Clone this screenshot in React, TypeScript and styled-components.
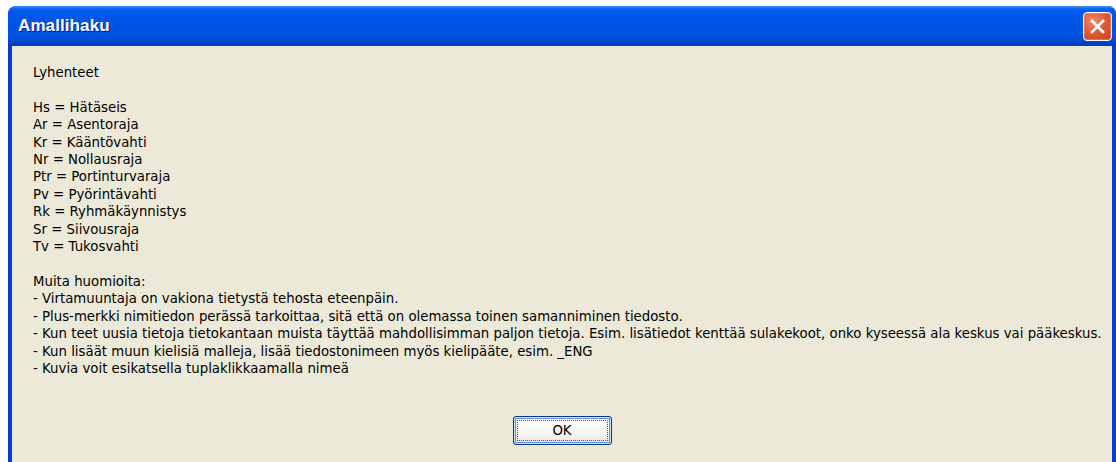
import React from 'react';
import styled, { createGlobalStyle } from 'styled-components';

const GlobalStyle = createGlobalStyle`
  html, body {
    margin: 0;
    padding: 0;
    background: #ffffff;
    overflow: hidden;
  }
  body {
    padding: 6px 0 0 8px;
  }
`;

const Window = styled.div`
  width: 1108px;
  height: 470px;
  display: flex;
  flex-direction: column;
  border-radius: 8px 8px 0 0;
  background: #0842d8;
  overflow: hidden;
`;

const TitleBar = styled.div`
  height: 40px;
  flex: none;
  display: flex;
  align-items: center;
  justify-content: space-between;
  padding: 0 4px 0 10px;
  background: linear-gradient(
    to bottom,
    #3d95ff 0px,
    #0a5ff0 3px,
    #0058ee 6px,
    #0054e3 20px,
    #0050dc 32px,
    #0045c9 37px,
    #0a3ab8 40px
  );
`;

const Title = styled.span`
  font-family: 'Liberation Sans', Arial, sans-serif;
  font-weight: bold;
  font-size: 17px;
  color: #ffffff;
  text-shadow: 1px 1px 0 #0a1883;
  letter-spacing: 0.1px;
`;

const CloseButton = styled.button`
  width: 29px;
  height: 29px;
  padding: 0;
  margin-top: 1px;
  border: 1px solid #ffffff;
  border-radius: 4px;
  background: radial-gradient(circle at 35% 30%, #f08a68 0%, #e25c36 45%, #c8401c 100%);
  display: flex;
  align-items: center;
  justify-content: center;
  box-shadow: inset 0 0 0 1px rgba(255, 160, 130, 0.4);
`;

const Frame = styled.div`
  flex: 1;
  display: flex;
  padding: 0 4px;
  background: linear-gradient(to right, #0a3bd0, #1660ee 40%, #0a3bd0);
`;

const Body = styled.div`
  flex: 1;
  min-width: 0;
  overflow: hidden;
  background: #ece9d8;
  padding-top: 18px;
  display: flex;
  flex-direction: column;
`;

const Text = styled.div`
  padding-left: 21px;
  font-family: 'DejaVu Sans', Tahoma, sans-serif;
  font-size: 13.3px;
  line-height: 17.4px;
  color: #000000;
  white-space: pre;
`;

const ButtonRow = styled.div`
  display: flex;
  justify-content: center;
  margin-top: 39px;
`;

const OkButton = styled.button<{ $default?: boolean }>`
  width: 99px;
  height: 29px;
  border: 1px solid #003c74;
  border-radius: 3px;
  background: linear-gradient(to bottom, #ffffff, #f3f3ef 70%, #e3e2da);
  box-shadow: ${({ $default }) =>
    $default ? 'inset 0 0 0 1px #cee7ff, inset 0 0 0 2px #6982ee' : 'none'};
  font-family: 'DejaVu Sans', Tahoma, sans-serif;
  font-size: 13.3px;
  color: #000000;
  position: relative;
  padding: 0;

  &::after {
    content: '';
    position: absolute;
    inset: 3px;
    border: 1px dotted #555;
  }
`;

const abbreviations = [
  'Hs = Hätäseis',
  'Ar = Asentoraja',
  'Kr = Kääntövahti',
  'Nr = Nollausraja',
  'Ptr = Portinturvaraja',
  'Pv = Pyörintävahti',
  'Rk = Ryhmäkäynnistys',
  'Sr = Siivousraja',
  'Tv = Tukosvahti',
];

const notes = [
  '- Virtamuuntaja on vakiona tietystä tehosta eteenpäin.',
  '- Plus-merkki nimitiedon perässä tarkoittaa, sitä että on olemassa toinen samanniminen tiedosto.',
  '- Kun teet uusia tietoja tietokantaan muista täyttää mahdollisimman paljon tietoja. Esim. lisätiedot kenttää sulakekoot, onko kyseessä ala keskus vai pääkeskus.',
  '- Kun lisäät muun kielisiä malleja, lisää tiedostonimeen myös kielipääte, esim. _ENG',
  '- Kuvia voit esikatsella tuplaklikkaamalla nimeä',
];

const message = ['Lyhenteet', '', ...abbreviations, '', 'Muita huomioita:', ...notes].join('\n');

const App: React.FC = () => {
  return (
    <>
      <GlobalStyle />
      <Window>
        <TitleBar>
          <Title>Amallihaku</Title>
          <CloseButton aria-label="Sulje">
            <svg width="17" height="17" viewBox="0 0 17 17">
              <path d="M3 3 L14 14 M14 3 L3 14" stroke="#ffffff" strokeWidth="2.6" strokeLinecap="square" />
            </svg>
          </CloseButton>
        </TitleBar>
        <Frame>
          <Body>
            <Text>{message}</Text>
            <ButtonRow>
              <OkButton $default>OK</OkButton>
            </ButtonRow>
          </Body>
        </Frame>
      </Window>
    </>
  );
};

export default App;
